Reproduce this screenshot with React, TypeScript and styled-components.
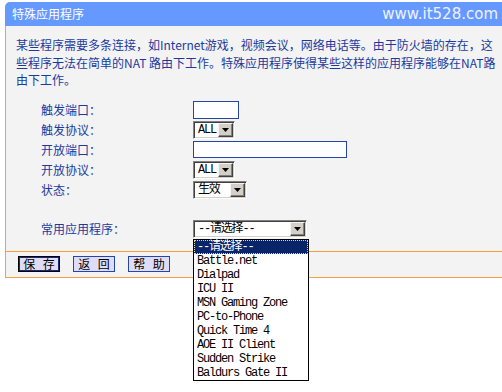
import React from 'react';
import styled, { createGlobalStyle } from 'styled-components';

const GlobalStyle = createGlobalStyle`
  html, body {
    margin: 0;
    padding: 0;
    background: #ffffff;
    overflow: hidden;
  }
  body {
    font-family: "Noto Sans CJK SC", sans-serif;
    font-size: 12px;
  }
`;

const ORANGE = '#fa9e3c';
const BLUE_TEXT = '#1c3a9e';
const MONO = `"Liberation Mono", "Noto Sans CJK SC", monospace`;

const Page = styled.div`
  width: 502px;
  height: 392px;
  padding-top: 2px;
  box-sizing: border-box;
`;

const Header = styled.header`
  margin-left: 5px;
  height: 24px;
  background: #6699ff;
  border-top-left-radius: 5px;
  display: flex;
  align-items: center;
  justify-content: space-between;
  padding: 0 4px 0 7px;
`;

const Title = styled.h1`
  margin: 0;
  font-size: 12px;
  font-weight: normal;
  color: #ffffff;
  line-height: 14px;
`;

const Site = styled.span`
  font-family: "DejaVu Sans", sans-serif;
  font-size: 15px;
  color: #eef2ff;
  line-height: 18px;
`;

const Panel = styled.section`
  margin-left: 5px;
  background: #f3f3f3;
  border-left: 1px solid ${ORANGE};
  border-bottom: 1px solid ${ORANGE};
`;

const Intro = styled.p`
  margin: 0;
  padding: 10px 0 0 10px;
  font-size: 12px;
  line-height: 17.5px;
  color: ${BLUE_TEXT};
  white-space: nowrap;
`;

const FormGrid = styled.div<{ $top: number }>`
  display: grid;
  grid-template-columns: 177px auto;
  grid-auto-rows: 20px;
  align-items: center;
  margin-top: ${(p) => p.$top}px;
  padding-left: 10px;
`;

const Label = styled.label`
  padding-left: 25px;
  color: ${BLUE_TEXT};
  font-size: 12px;
  line-height: 14px;
`;

const Field = styled.div`
  position: relative;
  display: flex;
  align-items: center;
`;

const TextBox = styled.input<{ $w: number; $h: number }>`
  width: ${(p) => p.$w}px;
  height: ${(p) => p.$h}px;
  box-sizing: border-box;
  margin: 0;
  padding: 0;
  border: 1px solid #2446a8;
  background: #ffffff;
  outline: none;
`;

const SelectBox = styled.div<{ $w: number }>`
  width: ${(p) => p.$w}px;
  height: 18px;
  box-sizing: border-box;
  display: flex;
  align-items: center;
  justify-content: space-between;
  background: #ffffff;
  border: 1px solid;
  border-color: #808080 #ffffff #ffffff #808080;
  box-shadow: inset 1px 1px 0 #404040, inset -1px -1px 0 #d4d0c8;
  padding: 1px 1px 1px 4px;
`;

const SelectValue = styled.span`
  font-family: ${MONO};
  font-size: 12px;
  letter-spacing: -1.2px;
  color: #000000;
  line-height: 14px;
`;

const ArrowButton = styled.span`
  width: 15px;
  height: 14px;
  box-sizing: border-box;
  display: flex;
  align-items: center;
  justify-content: center;
  background: #d4d0c8;
  border: 1px solid;
  border-color: #f4f4f4 #404040 #404040 #f4f4f4;
  box-shadow: inset -1px -1px 0 #808080;
`;

const DropList = styled.ul`
  position: absolute;
  top: 19px;
  left: 0;
  z-index: 5;
  width: 116px;
  box-sizing: border-box;
  margin: 0;
  padding: 0;
  list-style: none;
  background: #ffffff;
  border: 1px solid #000000;
`;

const DropItem = styled.li<{ $active?: boolean }>`
  height: 14px;
  box-sizing: border-box;
  padding-left: 2px;
  font-family: ${MONO};
  font-size: 12px;
  letter-spacing: -1.2px;
  line-height: 12px;
  white-space: nowrap;
  color: ${(p) => (p.$active ? '#ffffff' : '#000000')};
  background: ${(p) => (p.$active ? '#0a246a' : 'transparent')};
  border: 1px dotted ${(p) => (p.$active ? '#e6d890' : 'transparent')};
`;

const Divider = styled.hr`
  margin: 12px 0 0;
  border: none;
  height: 1px;
  background: ${ORANGE};
`;

const ButtonRow = styled.div`
  display: flex;
  gap: 13px;
  padding: 4px 0 5px 12px;
`;

const Button = styled.button<{ $primary?: boolean }>`
  width: 42px;
  height: 16px;
  box-sizing: border-box;
  margin: 0;
  padding: 0;
  font-family: "Noto Sans CJK SC", sans-serif;
  font-size: 12px;
  line-height: 12px;
  word-spacing: 5px;
  color: #000000;
  background: #dedcf6;
  border: 1px solid ${(p) => (p.$primary ? '#000000' : '#2446a8')};
  box-shadow: ${(p) => (p.$primary ? 'inset 0 0 0 1px #1a2a7a' : 'none')};
`;

const Arrow = () => (
  <ArrowButton>
    <svg width="7" height="4" viewBox="0 0 7 4">
      <polygon points="0,0 7,0 3.5,4" fill="#000" />
    </svg>
  </ArrowButton>
);

const Select: React.FC<{ w: number; value: string }> = ({ w, value }) => (
  <SelectBox $w={w}>
    <SelectValue>{value}</SelectValue>
    <Arrow />
  </SelectBox>
);

const apps = [
  '--请选择--',
  'Battle.net',
  'Dialpad',
  'ICU II',
  'MSN Gaming Zone',
  'PC-to-Phone',
  'Quick Time 4',
  'AOE II Client',
  'Sudden Strike',
  'Baldurs Gate II',
];

export default function App() {
  return (
    <>
      <GlobalStyle />
      <Page>
        <Header>
          <Title>特殊应用程序</Title>
          <Site>www.it528.com</Site>
        </Header>
        <Panel>
          <Intro>
            某些程序需要多条连接，如Internet游戏，视频会议，网络电话等。由于防火墙的存在，这
            <br />
            些程序无法在简单的NAT 路由下工作。特殊应用程序使得某些这样的应用程序能够在NAT路
            <br />
            由下工作。
          </Intro>
          <FormGrid $top={11}>
            <Label>触发端口：</Label>
            <Field>
              <TextBox $w={46} $h={18} />
            </Field>
            <Label>触发协议：</Label>
            <Field>
              <Select w={42} value="ALL" />
            </Field>
            <Label>开放端口：</Label>
            <Field>
              <TextBox $w={154} $h={17} />
            </Field>
            <Label>开放协议：</Label>
            <Field>
              <Select w={42} value="ALL" />
            </Field>
            <Label>状态：</Label>
            <Field>
              <Select w={54} value="生效" />
            </Field>
          </FormGrid>
          <FormGrid $top={19}>
            <Label>常用应用程序：</Label>
            <Field>
              <Select w={114} value="--请选择--" />
              <DropList>
                {apps.map((a, i) => (
                  <DropItem key={a} $active={i === 0}>
                    {a}
                  </DropItem>
                ))}
              </DropList>
            </Field>
          </FormGrid>
          <Divider />
          <ButtonRow>
            <Button $primary>保 存</Button>
            <Button>返 回</Button>
            <Button>帮 助</Button>
          </ButtonRow>
        </Panel>
      </Page>
    </>
  );
}
